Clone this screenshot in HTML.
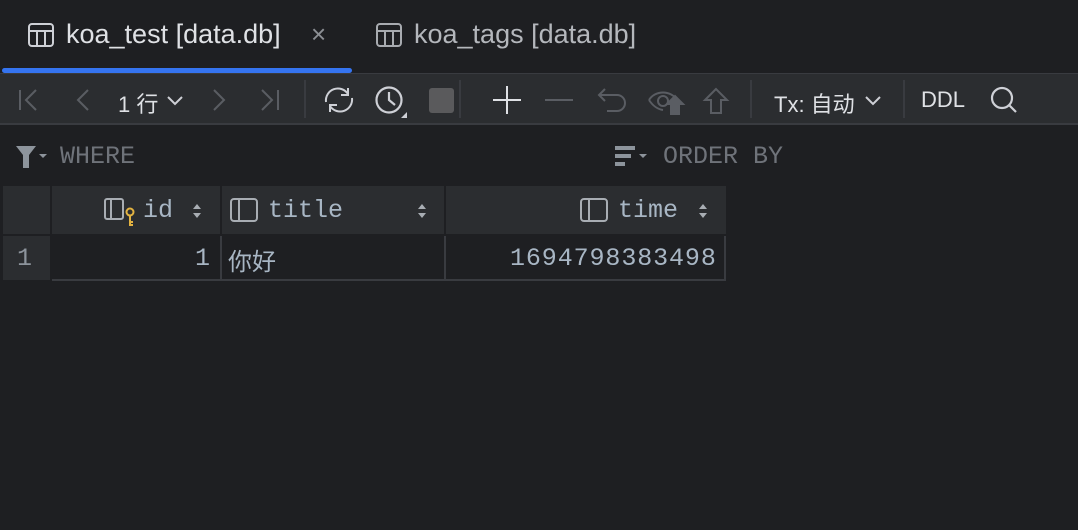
<!DOCTYPE html>
<html><head><meta charset="utf-8"><style>
body{margin:0;width:1078px;height:530px;background:#1e1f22;overflow:hidden;font-family:"Liberation Sans","Noto Sans CJK SC",sans-serif;position:relative;color:#dfe1e5}
.a{position:absolute}
.mono{font-family:"Liberation Mono","Noto Sans CJK SC",monospace;font-size:25px}
svg{position:absolute;overflow:visible}
</style></head><body>
<!-- tabs -->
<svg style="left:28px;top:23px" width="26" height="24" fill="none" stroke="#ced0d6" stroke-width="2"><rect x="1" y="1" width="24" height="22" rx="3"/><path d="M1 8H25M9 8V23M17 8V23"/></svg>
<div class="a" style="left:66px;top:19px;font-size:27px;color:#dfe1e5">koa_test [data.db]</div>
<div class="a" style="left:311px;top:19px;font-size:26px;color:#8c8f94">×</div>
<svg style="left:376px;top:23px" width="26" height="24" fill="none" stroke="#a8abb0" stroke-width="2"><rect x="1" y="1" width="24" height="22" rx="3"/><path d="M1 8H25M9 8V23M17 8V23"/></svg>
<div class="a" style="left:414px;top:19px;font-size:27px;color:#b4b7bc">koa_tags [data.db]</div>
<div class="a" style="left:2px;top:68px;width:350px;height:5px;background:#3574f0;border-radius:3px"></div>
<!-- toolbar -->
<div class="a" style="left:0;top:73px;width:1078px;height:52px;background:#2b2d30;border-top:1px solid #393b40;border-bottom:2px solid #393b40;box-sizing:border-box"></div>
<svg style="left:18px;top:88px" width="100" height="24" fill="none" stroke="#5a5d63" stroke-width="2"><path d="M2 2V22M18 2L8 12L18 22"/><path d="M70 2L60 12L70 22"/></svg>
<div class="a" style="left:118px;top:87px;font-size:22px;color:#dfe1e5">1 行</div>
<svg style="left:166px;top:95px" width="18" height="10" fill="none" stroke="#ced0d6" stroke-width="2"><path d="M2 2L9 9L16 2"/></svg>
<svg style="left:212px;top:88px" width="80" height="24" fill="none" stroke="#5a5d63" stroke-width="2"><path d="M2 2L12 12L2 22M50 2L60 12L50 22M66 2V22"/></svg>
<div class="a" style="left:304px;top:80px;width:2px;height:38px;background:#393b40"></div>
<svg style="left:322px;top:86px" width="34" height="28" fill="none" stroke="#ced0d6" stroke-width="2"><path d="M4 16A12 12 0 0 1 26 8M30 12A12 12 0 0 1 8 20M26 2V9H19M8 26V19H15"/></svg>
<svg style="left:375px;top:86px" width="34" height="32" fill="none" stroke="#ced0d6" stroke-width="2.2"><circle cx="14" cy="14" r="12.5"/><path d="M14 6V14L20 19"/><path d="M32 26L32 32L26 32Z" fill="#ced0d6" stroke="none"/></svg>
<div class="a" style="left:429px;top:88px;width:25px;height:25px;background:#5a5a5c;border-radius:3px"></div>
<div class="a" style="left:459px;top:80px;width:2px;height:38px;background:#393b40"></div>
<svg style="left:493px;top:86px" width="28" height="28" stroke="#dfe1e5" stroke-width="2"><path d="M14 0V28M0 14H28"/></svg>
<svg style="left:545px;top:99px" width="28" height="3" stroke="#5a5d63" stroke-width="2"><path d="M0 1H28"/></svg>
<svg style="left:597px;top:87px" width="30" height="28" fill="none" stroke="#5a5d63" stroke-width="2"><path d="M8 2L2 8L8 14M2 8H20A8 8 0 0 1 20 24H10"/></svg>
<svg style="left:647px;top:88px" width="40" height="30" fill="none" stroke="#5a5d63" stroke-width="2"><path d="M2 12C8 2 24 2 30 12M2 12C6 18 10 21 16 22"/><circle cx="16" cy="13" r="5"/><path d="M20 16L28 8L36 16H32V26H24V16Z" fill="#5a5d63"/></svg>
<svg style="left:703px;top:87px" width="26" height="28" fill="none" stroke="#5a5d63" stroke-width="2"><path d="M13 2L2 13H8V26H18V13H24Z"/></svg>
<div class="a" style="left:750px;top:80px;width:2px;height:38px;background:#393b40"></div>
<div class="a" style="left:774px;top:87px;font-size:22px;color:#dfe1e5">Tx: 自动</div>
<svg style="left:864px;top:95px" width="18" height="10" fill="none" stroke="#ced0d6" stroke-width="2"><path d="M2 2L9 9L16 2"/></svg>
<div class="a" style="left:903px;top:80px;width:2px;height:38px;background:#393b40"></div>
<div class="a" style="left:921px;top:87px;font-size:22px;color:#dfe1e5">DDL</div>
<svg style="left:990px;top:87px" width="28" height="28" fill="none" stroke="#ced0d6" stroke-width="2.2"><circle cx="12" cy="11" r="10"/><path d="M19 18L26 25"/></svg>
<!-- filter -->
<svg style="left:16px;top:146px" width="32" height="22" fill="#8d949c"><path d="M0 0H20L13 9V22H7V9Z"/><path d="M23 8H31L27 12Z"/></svg>
<div class="a mono" style="left:60px;top:142px;color:#6f737a">WHERE</div>
<svg style="left:615px;top:146px" width="34" height="22" fill="#8d949c"><rect x="0" y="0" width="20" height="4"/><rect x="0" y="8" width="16" height="4"/><rect x="0" y="16" width="10" height="4"/><path d="M24 8H32L28 12Z"/></svg>
<div class="a mono" style="left:663px;top:142px;color:#6f737a">ORDER BY</div>
<!-- table -->
<div class="a" style="left:3px;top:186px;width:723px;height:48px;background:#2b2d30"></div>
<div class="a" style="left:3px;top:234px;width:47px;height:46px;background:#2b2d30"></div>
<div class="a" style="left:50px;top:186px;width:2px;height:95px;background:#1e1f22"></div>
<div class="a" style="left:220px;top:186px;width:2px;height:95px;background:#1e1f22"></div>
<div class="a" style="left:444px;top:186px;width:2px;height:95px;background:#1e1f22"></div>
<div class="a" style="left:3px;top:234px;width:723px;height:2px;background:#1e1f22"></div>
<div class="a" style="left:52px;top:236px;width:674px;height:45px;border-bottom:2px solid #393b40;border-right:2px solid #393b40;box-sizing:border-box"></div>
<div class="a" style="left:220px;top:236px;width:2px;height:45px;background:#393b40"></div>
<div class="a" style="left:444px;top:236px;width:2px;height:45px;background:#393b40"></div>
<svg style="left:104px;top:198px" width="34" height="30" fill="none" stroke="#a8adb3" stroke-width="2"><rect x="1" y="1" width="18" height="20" rx="2"/><path d="M7 1V21"/><circle cx="26" cy="14" r="3.5" stroke="#e3b341"/><path d="M26 17.5V28M26 24H29M26 27H29" stroke="#e3b341"/></svg>
<div class="a mono" style="left:143px;top:196px;color:#a8b6c4">id</div>
<svg style="left:192px;top:203px" width="10" height="16" fill="#a8adb3"><path d="M1 6L5 1L9 6ZM1 10L5 15L9 10Z"/></svg>
<svg style="left:230px;top:198px" width="28" height="24" fill="none" stroke="#a8adb3" stroke-width="2"><rect x="1" y="1" width="26" height="22" rx="3"/><path d="M9 1V23"/></svg>
<div class="a mono" style="left:268px;top:196px;color:#a8b6c4">title</div>
<svg style="left:417px;top:203px" width="10" height="16" fill="#a8adb3"><path d="M1 6L5 1L9 6ZM1 10L5 15L9 10Z"/></svg>
<svg style="left:580px;top:198px" width="28" height="24" fill="none" stroke="#a8adb3" stroke-width="2"><rect x="1" y="1" width="26" height="22" rx="3"/><path d="M9 1V23"/></svg>
<div class="a mono" style="left:618px;top:196px;color:#a8b6c4">time</div>
<svg style="left:698px;top:203px" width="10" height="16" fill="#a8adb3"><path d="M1 6L5 1L9 6ZM1 10L5 15L9 10Z"/></svg>
<div class="a mono" style="left:17px;top:244px;color:#8d949c">1</div>
<div class="a mono" style="left:195px;top:244px;color:#a8b6c4">1</div>
<div class="a" style="left:228px;top:242px;font-size:24px;color:#a8b6c4">你好</div>
<div class="a mono" style="left:510px;top:244px;color:#a8b6c4;letter-spacing:0.9px">1694798383498</div>
</body></html>
